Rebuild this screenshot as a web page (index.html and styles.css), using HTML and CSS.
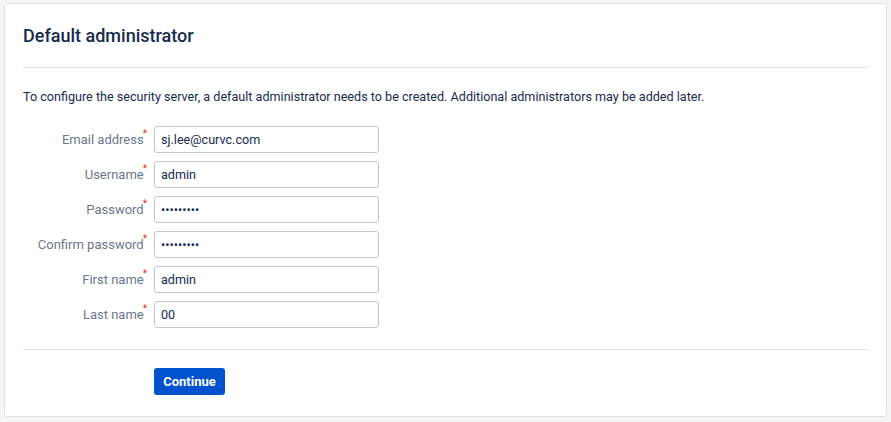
FILE: index.html
```html
<!DOCTYPE html>
<html>
<head>
<meta charset="utf-8">
<link rel="stylesheet" href="styles.css">
</head>
<body>
<div class="card">
  <div class="header"><h1 class="title">Default administrator</h1></div>
  <p class="desc">To configure the security server, a default administrator needs to be created. Additional administrators may be added later.</p>
  <form class="form">
    <div class="row"><label class="label">Email address<span class="req">*</span></label><input class="input" type="text" value="sj.lee@curvc.com"></div>
    <div class="row"><label class="label">Username<span class="req">*</span></label><input class="input" type="text" value="admin"></div>
    <div class="row"><label class="label">Password<span class="req">*</span></label><input class="input pw" type="password" value="123456789"></div>
    <div class="row"><label class="label">Confirm password<span class="req">*</span></label><input class="input pw" type="password" value="123456789"></div>
    <div class="row"><label class="label">First name<span class="req">*</span></label><input class="input" type="text" value="admin"></div>
    <div class="row"><label class="label">Last name<span class="req">*</span></label><input class="input" type="text" value="00"></div>
  </form>
  <div class="footer"><button class="btn" type="button">Continue</button></div>
</div>
</body>
</html>
```
FILE: styles.css
```css
html, body {
  margin: 0;
  padding: 0;
  background: #f4f5f7;
  font-family: Roboto, "Noto Sans", sans-serif;
  color: #172b4d;
}
body {
  padding: 3px 6px 0 4px;
}
.card {
  width: 845px;
  background: #fff;
  border: 1px solid #dfe1e6;
  border-radius: 3px;
  padding: 0 18px;
}
.header {
  padding: 20px 0 19px;
  border-bottom: 1px solid #dfe1e6;
}
.title {
  margin: 0;
  font-size: 18px;
  line-height: 24px;
  font-weight: 500;
  color: #172b4d;
}
.desc {
  margin: 19px 0 0;
  font-size: 12.6px;
  line-height: 20px;
  color: #172b4d;
}
.form {
  margin: 19px 0 0;
  display: flex;
  flex-direction: column;
  gap: 8px;
}
.row {
  display: flex;
  align-items: center;
}
.label {
  width: 131px;
  box-sizing: border-box;
  padding-right: 7px;
  text-align: right;
  font-size: 13px;
  line-height: 18px;
  color: #6b778c;
}
.req {
  display: inline-block;
  color: #de350b;
  font-size: 10px;
  line-height: 10px;
  vertical-align: top;
  margin-top: -2px;
  margin-left: -1px;
}
.input {
  box-sizing: border-box;
  width: 225px;
  height: 27px;
  margin: 0;
  border: 1px solid #c1c7d0;
  border-radius: 3px;
  padding: 0 6px;
  font-family: Roboto, sans-serif;
  font-size: 12.6px;
  color: #172b4d;
  background: #fff;
  outline: none;
}
.footer {
  margin-top: 21px;
  border-top: 1px solid #dfe1e6;
  padding: 18px 0 21px 131px;
}
.btn {
  display: block;
  height: 27px;
  width: 71px;
  border: none;
  border-radius: 3px;
  background: #0052cc;
  color: #fff;
  font-family: Roboto, sans-serif;
  font-weight: 700;
  font-size: 13px;
  padding: 0;
}
```
